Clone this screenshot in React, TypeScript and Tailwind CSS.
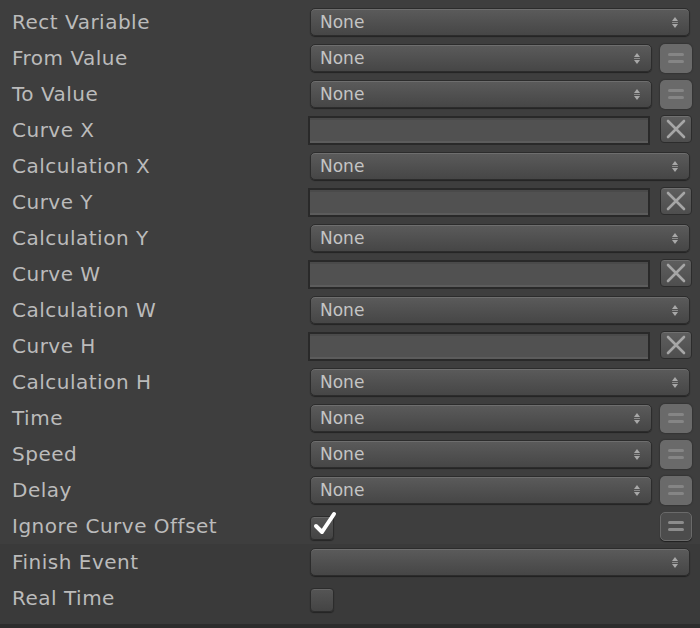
type Kind = "select" | "selectToggle" | "curve" | "check" | "checkToggle" | "empty";

const rows: { label: string; kind: Kind; value?: string; checked?: boolean }[] = [
  { label: "Rect Variable", kind: "select", value: "None" },
  { label: "From Value", kind: "selectToggle", value: "None" },
  { label: "To Value", kind: "selectToggle", value: "None" },
  { label: "Curve X", kind: "curve" },
  { label: "Calculation X", kind: "select", value: "None" },
  { label: "Curve Y", kind: "curve" },
  { label: "Calculation Y", kind: "select", value: "None" },
  { label: "Curve W", kind: "curve" },
  { label: "Calculation W", kind: "select", value: "None" },
  { label: "Curve H", kind: "curve" },
  { label: "Calculation H", kind: "select", value: "None" },
  { label: "Time", kind: "selectToggle", value: "None" },
  { label: "Speed", kind: "selectToggle", value: "None" },
  { label: "Delay", kind: "selectToggle", value: "None" },
  { label: "Ignore Curve Offset", kind: "checkToggle", checked: true },
];

const lowerRows: { label: string; kind: Kind; checked?: boolean }[] = [
  { label: "Finish Event", kind: "empty" },
  { label: "Real Time", kind: "check", checked: false },
];

function Arrows() {
  return (
    <svg width="8" height="13" viewBox="0 0 8 13" className="shrink-0">
      <path d="M4 1 L7 5 L1 5 Z" fill="#a8a8a8" />
      <rect x="1" y="6" width="6" height="1" fill="#8a8a8a" />
      <path d="M4 12 L7 8 L1 8 Z" fill="#a8a8a8" />
    </svg>
  );
}

function Dropdown({ value, wide }: { value?: string; wide: boolean }) {
  return (
    <div
      className={`flex h-[28px] items-center justify-between rounded-[5px] border border-[#2c2c2c] bg-gradient-to-b from-[#5b5b5b] to-[#464646] pl-[9px] pr-[10px] shadow-[inset_0_1px_0_#6e6e6e,0_1px_1px_rgba(0,0,0,0.45)] ${
        wide ? "w-[380px]" : "w-[342px]"
      }`}
    >
      <span className="text-[17px] leading-none text-[#c4c4c4]">{value ?? ""}</span>
      <Arrows />
    </div>
  );
}

function ToggleButton({ dark }: { dark?: boolean }) {
  return (
    <div
      className={`ml-[8px] flex h-[29px] w-[32px] flex-col items-center justify-center gap-[4px] rounded-[5px] ${
        dark
          ? "border border-[#6a6a6a] bg-[#4c4c4c] shadow-[0_1px_1px_rgba(0,0,0,0.5)]"
          : "bg-[#6a6a6a] shadow-[0_0_2px_rgba(0,0,0,0.5)]"
      }`}
    >
      <div className={`h-[3px] w-[16px] rounded-full ${dark ? "bg-[#8c8c8c]" : "bg-[#858585]"}`} />
      <div className={`h-[3px] w-[16px] rounded-full ${dark ? "bg-[#8c8c8c]" : "bg-[#858585]"}`} />
    </div>
  );
}

function ClearButton() {
  return (
    <div className="ml-[10px] mt-[-3px] flex h-[28px] w-[32px] items-center justify-center rounded-[4px] border border-[#2c2c2c] bg-gradient-to-b from-[#5e5e5e] to-[#4e4e4e] shadow-[inset_0_1px_0_#707070]">
      <svg width="20" height="20" viewBox="0 0 20 20">
        <path d="M2 2 L18 18 M18 2 L2 18" stroke="#a6a6a6" strokeWidth="2.6" strokeLinecap="round" />
      </svg>
    </div>
  );
}

function CurveField() {
  return (
    <div className="ml-[-2px] h-[29px] w-[342px] border-2 border-[#292929] bg-[#515151] shadow-[inset_0_-2px_0_#5c5c5c,inset_0_2px_0_#4a4a4a]" />
  );
}

function Checkbox({ checked }: { checked?: boolean }) {
  return (
    <div className="relative h-[24px] w-[24px] rounded-[4px] border border-[#2c2c2c] bg-gradient-to-b from-[#555555] to-[#444444] shadow-[inset_0_1px_0_#666666,0_1px_1px_rgba(0,0,0,0.4)]">
      {checked && (
        <svg width="26" height="26" viewBox="0 0 26 26" className="absolute left-[2px] top-[-6px]">
          <path d="M3 15 L9 21 L21 3" fill="none" stroke="#ffffff" strokeWidth="4" strokeLinecap="round" strokeLinejoin="round" />
        </svg>
      )}
    </div>
  );
}

function Control({ kind, value, checked }: { kind: Kind; value?: string; checked?: boolean }) {
  if (kind === "select") return <Dropdown value={value} wide />;
  if (kind === "empty") return <Dropdown wide />;
  if (kind === "selectToggle")
    return (
      <>
        <Dropdown value={value} wide={false} />
        <ToggleButton />
      </>
    );
  if (kind === "curve")
    return (
      <>
        <CurveField />
        <ClearButton />
      </>
    );
  if (kind === "checkToggle")
    return (
      <>
        <div className="mt-[4px] w-[342px]">
          <Checkbox checked={checked} />
        </div>
        <ToggleButton dark />
      </>
    );
  return (
    <div className="mt-[4px]">
      <Checkbox checked={checked} />
    </div>
  );
}

export default function App() {
  return (
    <div className="flex h-[628px] w-[700px] flex-col overflow-hidden bg-[#3e3e3e] font-['DejaVu_Sans',sans-serif]">
      <div className="pt-[4px]">
        {rows.map((row) => (
          <div key={row.label} className="flex h-[36px] items-center">
            <div className="w-[310px] pl-[12px] text-[20px] leading-none tracking-[0.5px] text-[#bbbbbb]">{row.label}</div>
            <div className="flex items-center">
              <Control kind={row.kind} value={row.value} checked={row.checked} />
            </div>
          </div>
        ))}
      </div>
      <div className="flex-1 bg-[#3a3a3a]">
        {lowerRows.map((row) => (
          <div key={row.label} className="flex h-[36px] items-center">
            <div className="w-[310px] pl-[12px] text-[20px] leading-none tracking-[0.5px] text-[#bbbbbb]">{row.label}</div>
            <div className="flex items-center">
              <Control kind={row.kind} checked={row.checked} />
            </div>
          </div>
        ))}
      </div>
      <div className="h-[4px] bg-[#2c2c2c]" />
    </div>
  );
}
